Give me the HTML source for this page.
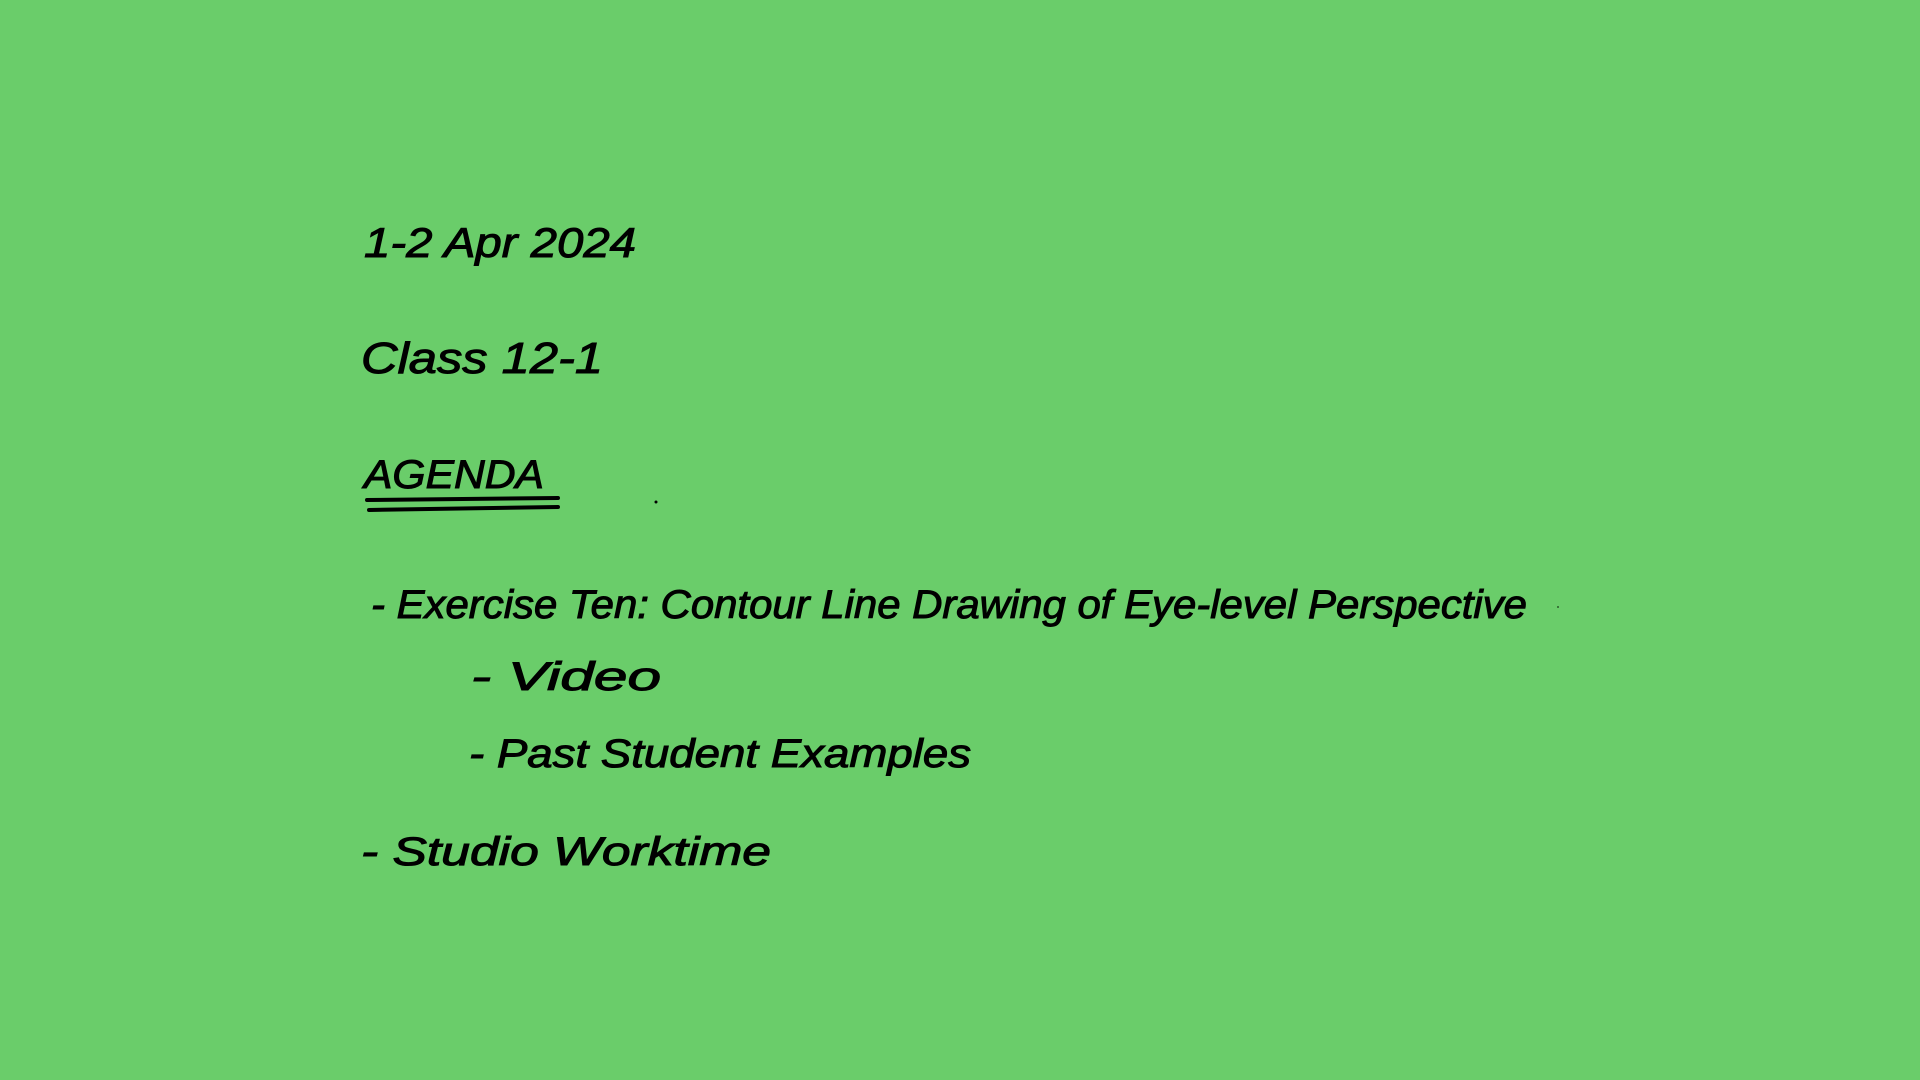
<!DOCTYPE html>
<html><head><meta charset="utf-8"><style>
html,body{margin:0;padding:0;width:1920px;height:1080px;background:#6acd6a;overflow:hidden}
svg{position:absolute;left:0;top:0}
text{font-family:"Liberation Sans",sans-serif;font-style:italic;fill:#000;stroke:#000;stroke-width:1}
</style></head><body>
<svg width="1920" height="1080" viewBox="0 0 1920 1080">
<text x="364" y="257" font-size="42" textLength="272" lengthAdjust="spacingAndGlyphs">1-2 Apr 2024</text>
<text x="361" y="373" font-size="44" textLength="242" lengthAdjust="spacingAndGlyphs">Class 12-1</text>
<text x="364" y="488" font-size="40" textLength="180" lengthAdjust="spacingAndGlyphs">AGENDA</text>
<line x1="367" y1="500" x2="558" y2="498" stroke="#000" stroke-width="4" stroke-linecap="round"/>
<line x1="369" y1="510" x2="558" y2="507" stroke="#000" stroke-width="4" stroke-linecap="round"/>
<circle cx="656" cy="502" r="1.5" fill="#000"/>
<circle cx="1558" cy="607" r="1" fill="#2a5a2a"/>
<text x="371" y="618" font-size="40" textLength="1156" lengthAdjust="spacingAndGlyphs">-  Exercise Ten: Contour Line Drawing of Eye-level Perspective</text>
<text x="471" y="690" font-size="40" textLength="190" lengthAdjust="spacingAndGlyphs">-  Video</text>
<text x="469" y="767" font-size="40" textLength="502" lengthAdjust="spacingAndGlyphs">-  Past Student Examples</text>
<text x="361" y="865" font-size="40" textLength="410" lengthAdjust="spacingAndGlyphs">-  Studio Worktime</text>
</svg>
</body></html>
